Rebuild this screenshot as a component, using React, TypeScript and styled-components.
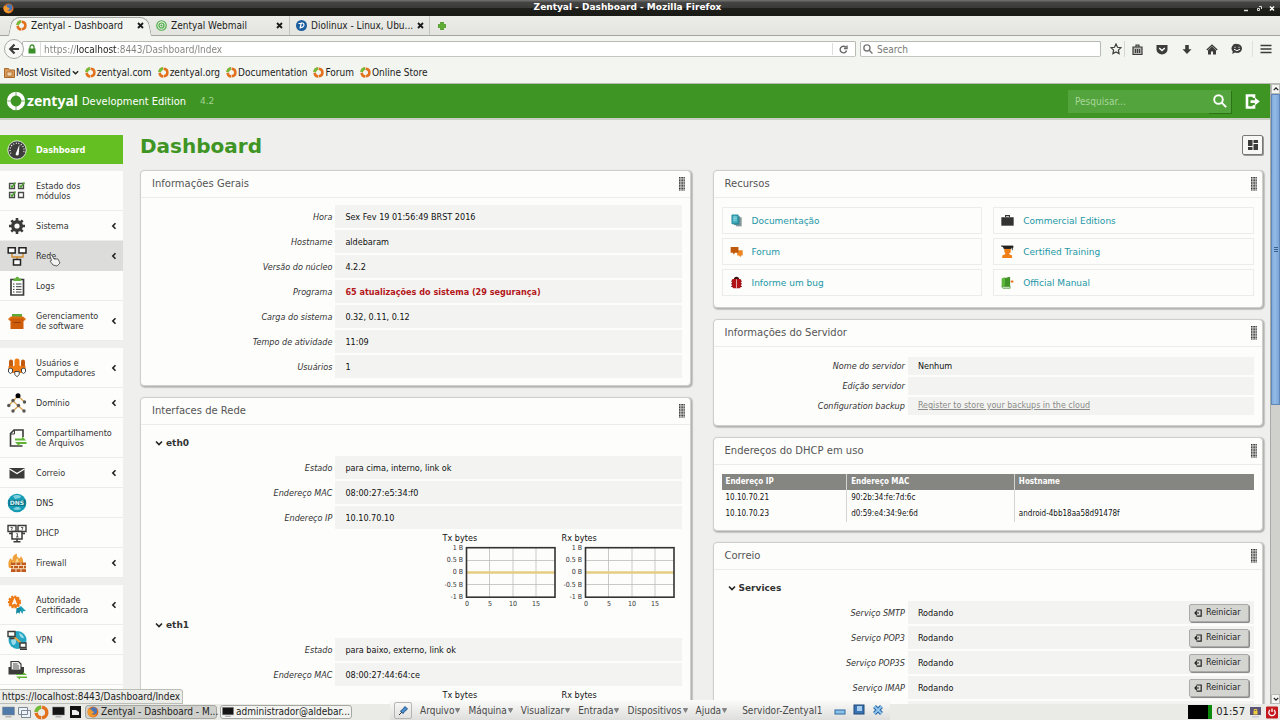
import React from "react";
import styled, { createGlobalStyle, css } from "styled-components";

const sans = `"DejaVu Sans", Verdana, sans-serif`;
const condensed = `"DejaVu Sans Condensed", "DejaVu Sans", Verdana, sans-serif`;

const color = {
  green: "#3e9523",
  active: "#64c022",
  chrome: "#f3f5f0",
  page: "#efefed",
  paper: "#fdfdfc",
  band: "#f3f4f1",
  line: "#ececea",
  link: "#1c97a5",
  ink: "#333333",
};

const GlobalStyle = createGlobalStyle`
  *, *::before, *::after { box-sizing: border-box; }
  body { margin: 0; font-family: ${condensed}; font-size: 9px; color: ${color.ink}; }
  button, input { font: inherit; color: inherit; margin: 0; padding: 0; border: 0; background: none; }
  a { color: inherit; text-decoration: none; }
  svg { display: block; flex: none; }
  h1, h2, h3, p, dl, dd, dt, ul { margin: 0; padding: 0; font-weight: normal; }
  ul { list-style: none; }
`;

/* ---------- window chrome ---------- */

const Desktop = styled.div`
  position: relative;
  display: flex;
  flex-direction: column;
  height: 100vh;
  overflow: hidden;
`;

const TitleBar = styled.header`
  display: flex;
  align-items: center;
  flex: none;
  height: 16px;
  padding: 0 3px;
  background: linear-gradient(#6b6b69 0 1px, #454543 2px, #3a3a38 8px, #1f1f1c 8px, #191916);
  color: #fff;
`;

const WindowTitle = styled.p`
  flex: 1;
  padding-bottom: 2px;
  text-align: center;
  font: bold 9px/12px ${sans};
`;

const WindowButtons = styled.div`
  display: flex;
  gap: 3px;
`;

const TabStrip = styled.div`
  display: flex;
  align-items: stretch;
  flex: none;
  height: 20px;
  padding-left: 10px;
  background: linear-gradient(#ecede9, #e3e4df);
  border-bottom: 1px solid #a3a5a0;
`;

const Tab = styled.div<{ $active?: boolean; $divided?: boolean }>`
  position: relative;
  display: flex;
  align-items: center;
  gap: 4px;
  width: 140px;
  padding: 0 6px;
  color: #1d1d1b;
  font-size: 10px;
  line-height: 14px;
  z-index: 0;
  ${(p) => p.$divided && css`border-right: 1px solid #c4c6c0;`}
  ${(p) =>
    p.$active &&
    css`
      &::before,
      &::after {
        content: "";
        position: absolute;
        z-index: -1;
        top: 1px;
        bottom: -1px;
        background: ${color.chrome};
        border-top: 1px solid #a3a5a0;
      }
      &::before {
        left: 0;
        right: 50%;
        border-left: 1px solid #a3a5a0;
        border-radius: 8px 0 0 0;
        transform: skewX(-12deg);
      }
      &::after {
        left: 40%;
        right: 0;
        border-right: 1px solid #a3a5a0;
        border-radius: 0 8px 0 0;
        transform: skewX(12deg);
      }
    `}
`;

const TabLabel = styled.button`
  flex: 1;
  text-align: left;
  white-space: nowrap;
`;

const IconButton = styled.button`
  display: flex;
  align-items: center;
  justify-content: center;
`;

const NewTab = styled(IconButton)`
  padding: 1px 8px 0;
`;

const NavBar = styled.div`
  display: flex;
  align-items: center;
  flex: none;
  height: 26px;
  padding: 0 8px 0 4px;
  background: ${color.chrome};
`;

const BackButton = styled(IconButton)`
  flex: none;
  width: 20px;
  height: 20px;
  border: 1px solid #a9aba6;
  border-radius: 50%;
  background: #f8f9f6;
  z-index: 1;
`;

const Field = styled.label`
  display: flex;
  align-items: center;
  height: 16px;
  background: #fff;
  border: 1px solid #b7b9b3;
  border-bottom-color: #c5c7c1;
  border-radius: 2px;
  font-size: 10px;
`;

const AddressField = styled(Field)`
  flex: 1;
  margin-left: -2px;
  padding: 0 7px 0 5px;
`;

const AddressInput = styled.input`
  flex: 1;
  min-width: 0;
  height: 14px;
  margin-left: 4px;
  padding-left: 3px;
  border-left: 1px solid #dddeda;
  outline: none;
  background: linear-gradient(90deg, #80827e 35px, #1d1d1b 35px 76px, #80827e 76px) padding-box text;
  color: transparent;
`;

const ReloadButton = styled(IconButton)`
  height: 12px;
  padding-left: 6px;
  border-left: 1px solid #dddeda;
`;

const SearchField = styled(Field)`
  flex: 0 1 241px;
  margin-left: 4px;
  padding: 0 2px;
`;

const SearchInput = styled.input`
  flex: 1;
  min-width: 0;
  height: 14px;
  padding-left: 4px;
  outline: none;
  &::placeholder { color: #777975; opacity: 1; }
`;

const ToolIcons = styled.div`
  display: flex;
  align-items: center;
  gap: 13px;
  padding-left: 9px;
  color: #3c3d3a;
`;

const ToolButton = styled(IconButton)<{ $rule?: "before" | "after" }>`
  width: 12px;
  height: 16px;
  ${(p) =>
    p.$rule === "after" &&
    css`
      width: 15px;
      margin-right: -7px;
      justify-content: flex-start;
      border-right: 1px solid #d5d7d1;
    `}
  ${(p) =>
    p.$rule === "before" &&
    css`
      width: 20px;
      margin-left: -4px;
      justify-content: flex-end;
      border-left: 1px solid #dfe1db;
    `}
`;

const Bookmarks = styled.nav`
  display: flex;
  align-items: center;
  flex: none;
  gap: 6px;
  height: 22px;
  padding: 0 4px;
  background: ${color.chrome};
  border-bottom: 1px solid #b9bbb5;
  color: #222;
  font-size: 10px;
`;

const Bookmark = styled.a`
  display: flex;
  align-items: center;
  gap: 1px;
`;

const Viewport = styled.div`
  display: flex;
  flex: 1;
  min-height: 0;
`;

const Page = styled.div`
  flex: 1;
  min-width: 0;
  overflow: hidden;
  background: ${color.page};
`;

const ScrollTrack = styled.div`
  display: flex;
  flex-direction: column;
  flex: none;
  width: 10px;
  background: #d0d1cc;
  border-left: 1px solid #a9aba6;
`;

const ScrollThumb = styled.div`
  display: flex;
  align-items: center;
  justify-content: center;
  flex: 1;
  margin-bottom: 289px;
  background: linear-gradient(90deg, #7fabdd, #94bbe6 40%, #7ba6d8);
  border: 1px solid #5f87b8;
`;

const ScrollArrow = styled(IconButton)`
  flex: none;
  height: 10px;
  background: #f4f5f2;
  border: 1px solid #b9bbb5;
`;

/* ---------- Zentyal page ---------- */

const AppHeader = styled.header`
  display: flex;
  align-items: center;
  height: 36px;
  padding: 0 10px 0 6px;
  background: ${color.green};
  border-bottom: 2px solid #c9cfc3;
  color: #fff;
`;

const Brand = styled.a`
  display: flex;
  align-items: center;
  gap: 1px;
  font: bold 14px/20px "Noto Sans", "Open Sans", sans-serif;
`;

const Edition = styled.span`
  margin-left: 4px;
  font-size: 11px;
`;

const Version = styled.span`
  flex: 1;
  margin-left: 14px;
  color: #a5d294;
  font: 9px/12px ${sans};
`;

const SiteSearch = styled.form`
  display: flex;
  width: 163px;
  height: 23px;
  background: #53a43c;
`;

const SiteSearchInput = styled.input`
  flex: 1;
  min-width: 0;
  padding-left: 7px;
  outline: none;
  font-size: 10px;
  &::placeholder { color: #a9d69a; opacity: 1; }
`;

const SiteSearchButton = styled(IconButton)`
  width: 23px;
  box-shadow: 1px 1px 0 #2c7316;
`;

const LogoutButton = styled(IconButton)`
  margin-left: 14px;
`;

const Body = styled.div`
  display: flex;
  align-items: flex-start;
  padding-top: 15px;
`;

const Sidebar = styled.nav`
  display: flex;
  flex-direction: column;
  flex: none;
  gap: 7px;
  width: 123px;
`;

const NavGroup = styled.ul`
  background: ${color.paper};
`;

const NavItem = styled.a<{ $tall?: boolean; $state?: "active" | "hover" }>`
  display: flex;
  align-items: center;
  gap: 9px;
  height: ${(p) => (p.$tall ? 40 : 30)}px;
  padding: 0 5px 0 7px;
  border-bottom: 1px solid ${color.line};
  font-size: 9px;
  line-height: 10px;
  ${(p) => p.$state === "hover" && css`background: #dcdcda; border-color: #dcdcda;`}
  ${(p) =>
    p.$state === "active" &&
    css`
      height: 29px;
      background: ${color.active};
      border: 0;
      color: #fff;
      font-weight: bold;
    `}
`;

const NavText = styled.span`
  flex: 1;
  white-space: pre;
`;

const Main = styled.main`
  flex: 1;
  min-width: 0;
  padding: 0 7px 0 17px;
`;

const TitleRow = styled.div`
  display: flex;
  justify-content: space-between;
  height: 35px;
`;

const PageTitle = styled.h1`
  color: ${color.green};
  font: bold 20px/22px ${sans};
`;

const LayoutButton = styled(IconButton)`
  width: 21px;
  height: 20px;
  background: #f7f7f5;
  border: 1px solid #777;
  border-radius: 2px;
  box-shadow: 1px 1px 0 #999;
`;

const Columns = styled.div`
  display: grid;
  grid-template-columns: 1fr 1fr;
  gap: 22px;
`;

const Column = styled.div`
  display: flex;
  flex-direction: column;
  min-width: 0;
  gap: 11px;
`;

const PanelBox = styled.section`
  background: ${color.paper};
  border: 1px solid #cfcfcc;
  border-radius: 4px;
  box-shadow: 1px 1px 0 #b4b4b1, 1px 1px 1px 1px #c4c4c1;
`;

const PanelHead = styled.header`
  display: flex;
  align-items: center;
  justify-content: space-between;
  height: 27px;
  padding: 0 5px 0 11px;
  border-bottom: 1px solid ${color.line};
`;

const PanelTitle = styled.h2`
  color: #555;
  font: 10px/14px ${sans};
`;

const PanelBody = styled.div<{ $top?: number; $bottom?: number }>`
  padding: ${(p) => p.$top ?? 0}px 8px ${(p) => p.$bottom ?? 7}px;
`;

const SectionTitle = styled.h3`
  display: flex;
  align-items: center;
  gap: 3px;
  height: 31px;
  padding: 5px 6px 0;
  font: bold 9px/12px ${sans};
`;

const Facts = styled.dl<{ $dense?: boolean }>`
  display: grid;
  grid-template-columns: 35fr 65fr;
  grid-auto-rows: ${(p) => (p.$dense ? 18 : 23)}px;
  gap: 2px 0;
`;

const FactLabel = styled.dt`
  display: flex;
  align-items: center;
  justify-content: flex-end;
  padding-right: 3px;
  font-style: italic;
`;

const FactValue = styled.dd<{ $alert?: boolean }>`
  display: flex;
  align-items: center;
  justify-content: space-between;
  padding: 0 5px 0 10px;
  background: ${color.band};
  color: #111;
  ${(p) => p.$alert && css`color: #b3161b; font-weight: bold;`}
`;

const BackupLink = styled.a`
  color: #8a8a88;
  text-decoration: underline;
  font: 8px/12px ${sans};
`;

const RestartButton = styled(IconButton)`
  justify-content: flex-start;
  gap: 4px;
  width: 60px;
  height: 18px;
  padding-left: 4px;
  background: #d4d4d1;
  border: 1px solid #aaa;
  border-radius: 2px;
  box-shadow: 1px 1px 0 #8c8c8a;
  color: #222;
  font: 8px/12px ${sans};
`;

const Charts = styled.div`
  display: flex;
  justify-content: flex-end;
  gap: 6px;
  height: 78px;
  padding: 2px 7px 0 0;
`;

const ChartBox = styled.figure`
  margin: 0;
`;

const ChartCaption = styled.figcaption`
  color: #111;
  line-height: 14px;
`;

const LinkGrid = styled.div`
  display: grid;
  grid-template-columns: 1fr 1fr;
  gap: 4px 11px;
`;

const ResourceLink = styled.a`
  display: flex;
  align-items: center;
  gap: 9px;
  height: 27px;
  padding-left: 7px;
  border: 1px solid ${color.line};
  color: ${color.link};
  font: 9px/12px ${sans};
`;

const LeaseTable = styled.table`
  width: 100%;
  table-layout: fixed;
  border-collapse: collapse;
  color: #111;
  font-size: 8px;
  line-height: 10px;
  th, td { height: 16px; padding: 0 4px; text-align: left; }
  th { background: #858581; color: #fff; }
  th + th, td + td { border-left: 1px solid #d4d4d1; }
`;

const LeaseCol = styled.col<{ $share: number }>`
  width: ${(p) => p.$share}%;
`;

/* ---------- desktop panel and overlays ---------- */

const StatusTip = styled.div`
  position: absolute;
  left: 0;
  bottom: 16px;
  padding: 0 2px 0 2px;
  background: #ecede9;
  border: 1px solid #bbbdb7;
  border-left: 0;
  border-top-right-radius: 3px;
  color: #222;
  font-size: 10px;
  line-height: 13px;
`;

const TaskBar = styled.footer`
  display: flex;
  align-items: center;
  flex: none;
  gap: 3px;
  height: 16px;
  padding: 0 2px;
  background: #eaebe7;
  font-size: 10px;
`;

const TaskButton = styled.button<{ $pressed?: boolean }>`
  display: flex;
  align-items: center;
  gap: 2px;
  width: 132px;
  height: 14px;
  padding: 0 1px;
  white-space: nowrap;
  border: 1px solid #a5a7a1;
  border-radius: 3px;
  background: ${(p) => (p.$pressed ? "#cfd0cb" : "#f3f4f1")};
  color: #222;
  line-height: 12px;
`;

const Tray = styled.div`
  display: flex;
  align-items: center;
  gap: 4px;
  margin-left: auto;
`;

const CpuMeter = styled.div`
  width: 24px;
  height: 14px;
  background: #000;
  border-right: 4px solid #0c8a0c;
`;

const Clock = styled.time`
  color: #222;
  font: 10px/14px ${sans};
`;

const GuestBar = styled.div`
  position: absolute;
  left: 390px;
  bottom: 0;
  display: flex;
  align-items: center;
  width: 500px;
  height: 20px;
  padding: 0 6px 0 4px;
  background: linear-gradient(#fbfbfa, #dededc);
  color: #4a4a49;
  font-size: 10px;
`;

const GuestMenu = styled.button`
  display: flex;
  align-items: center;
  gap: 1px;
  margin-right: 8px;
`;

const GuestPin = styled(IconButton)`
  width: 18px;
  height: 17px;
  margin-right: 8px;
  border: 1px solid #b5b5b3;
  border-radius: 2px;
`;

const GuestName = styled.span`
  flex: 1;
  padding-left: 7px;
  white-space: nowrap;
`;

const GuestActions = styled.div`
  display: flex;
  align-items: center;
  gap: 7px;
`;

const Pointer = styled.div`
  position: absolute;
  left: 49px;
  top: 254px;
`;

/* ---------- drawings ---------- */

type Size = { size?: number };

const Ring = ({ size = 11 }: Size) => (
  <svg width={size} height={size} viewBox="0 0 24 24" fill="none" strokeWidth="5.500">
    <circle cx="12" cy="12" r="8.5" stroke="#e2701c" strokeDasharray="12 1.35" />
    <path d="M3.5 11A8.5 8.5 0 0 1 11 3.5" stroke="#6fbf3a" />
  </svg>
);

const BrandRing = () => (
  <svg width="20" height="20" viewBox="0 0 20 20" fill="none">
    <circle cx="10" cy="10" r="7.300" stroke="#fff" strokeWidth="3.800" />
    <path d="M10 0v6M10 14v6M0 10h6M14 10h6" stroke={color.green} strokeWidth=".7" />
  </svg>
);

const Target = () => (
  <svg width="11" height="11" viewBox="0 0 22 22" fill="none" stroke="#4db046" strokeWidth="2.4">
    <circle cx="11" cy="11" r="9.5" />
    <circle cx="11" cy="11" r="5" />
    <circle cx="11" cy="11" r="1" />
  </svg>
);

const DioIcon = () => (
  <svg width="11" height="11" viewBox="0 0 22 22">
    <circle cx="11" cy="11" r="11" fill="#1d5f9e" />
    <path d="M8 17 10.500 6H13a3.500 4 0 0 1 1 7.500Q12 15 9 15M5 7h7" fill="none" stroke="#fff" strokeWidth="2.400" />
  </svg>
);

const Firefox = ({ size = 11 }: Size) => (
  <svg width={size} height={size} viewBox="0 0 22 22">
    <circle cx="11" cy="11" r="10" fill="#d96b1d" />
    <circle cx="12" cy="9" r="6.500" fill="#4a76b8" />
    <path d="M2 5q2 2 5 1 3 1 2 4 3-1 4 1-1 4-5 3 3 4 9 1-2 5-8 5-8-2-8-10z" fill="#f29a2e" />
  </svg>
);

const CloseX = () => (
  <svg width="7" height="7" viewBox="0 0 7 7" stroke="#1a1a1a" strokeWidth="1.800">
    <path d="m1 1 5 5M6 1 1 6" />
  </svg>
);

const Plus = () => (
  <svg width="8" height="8" viewBox="0 0 8 8">
    <path d="M2.500 0h3v2.500H8v3H5.500V8h-3V5.500H0v-3h2.500z" fill="#5fae32" stroke="#3f8a1c" strokeWidth=".6" />
  </svg>
);

const Chevron = ({ dir = "down", size = 8 }: Size & { dir?: "down" | "left" | "up" }) => (
  <svg width={size} height={size} viewBox="0 0 8 8" fill="none" stroke="#222" strokeWidth="1.600">
    <path d={dir === "down" ? "m1 2.500 3 3 3-3" : dir === "up" ? "m1 5.500 3-3 3 3" : "M5.500 1.200 2.800 4l2.700 2.800"} />
  </svg>
);

const Lens = ({ size = 10, stroke = "#777" }: Size & { stroke?: string }) => (
  <svg width={size} height={size} viewBox="0 0 14 14" fill="none" stroke={stroke} strokeWidth="1.900">
    <circle cx="5.500" cy="5.500" r="4.300" />
    <path d="m8.700 8.700 4.500 4.500" />
  </svg>
);

const Handle = () => (
  <svg width="6" height="14" viewBox="0 0 6 14" aria-hidden="true">
    {[0, 1, 2, 3].map((x) =>
      [0, 1, 2, 3, 4, 5, 6, 7, 8].map((y) => (
        <rect key={`${x}-${y}`} x={x * 1.55} y={y * 1.55} width="1.150" height="1.150" fill="#333" />
      )),
    )}
  </svg>
);

const Monitor = ({ fill = "#151515", size = 13 }: Size & { fill?: string }) => (
  <svg width={size} height="12" viewBox="0 0 13 12">
    <path d="M.500 1h12v8H.500z" fill={fill} stroke="#888" strokeWidth=".500" />
    <path d="M4 10h5l1 1.500H3z" fill="#b5b5b5" />
  </svg>
);

const icons: Record<string, React.ReactNode> = {
  gauge: (
    <>
      <circle cx="10" cy="10" r="9.200" fill="#3d3e3c" stroke="#fff" strokeWidth=".8" />
      <path d="M3.800 13.500A7 7 0 1 1 16.200 13.500" fill="none" stroke="#fff" strokeWidth="1.300" strokeDasharray=".9 1.700" />
      <path d="M8.600 14 12.500 4.500 11.700 14.500a1.600 1.600 0 0 1-3.100-.500z" fill="#fff" />
    </>
  ),
  modules: (
    <>
      <path d="M2.500 2.500h5v5h-5zM11.500 2.500h5v5h-5zM2.500 11.500h5v5h-5zM11.500 11.500h5v5h-5z" fill="none" stroke="#4a4b48" strokeWidth="1.300" />
      <path d="m3.500 4.500 1.500 1.500L8.500 1.500m4 3 1.500 1.500 3.500-4.500m-14 12 1.500 1.500 3.500-4.500" fill="none" stroke="#4f9e35" strokeWidth="1.500" />
    </>
  ),
  gear: (
    <g stroke="#3b3c3a">
      <circle cx="10" cy="10" r="4.300" fill="none" strokeWidth="3.400" />
      <path d="M10 2v3.500M10 14.500V18M2 10h3.500M14.500 10H18M4.300 4.300 7 7M13 13l2.700 2.700M4.300 15.700 7 13M13 7l2.700-2.700" strokeWidth="2.600" />
    </g>
  ),
  network: (
    <>
      <path d="M5 7v4h11V7m-6 4v3" fill="none" stroke="#cf8a2b" strokeWidth="1.400" />
      <path d="M1.200 1.700h7v5.300h-7zM12 1.700h7v5.300h-7zM6.500 13.500h7V19h-7z" fill="#fff" stroke="#222" strokeWidth="1.500" />
    </>
  ),
  logs: (
    <>
      <path d="M4 3.500h12.500V19H4z" fill="#fff" stroke="#3b3c3a" strokeWidth="1.700" />
      <path d="M6.500 2.500h2a1.800 1.800 0 0 1 3.600 0h2V5h-7.600z" fill="#62b13b" />
      <path d="M6 8h1.500M9 8h5.500M6 10.700h1.500M9 10.700h5.500M6 13.400h1.500M9 13.400h5.500M6 16h1.500M9 16h5.500" stroke="#3b3c3a" />
    </>
  ),
  box: (
    <>
      <path d="M5 3h10v4H5z" fill="#5eab38" />
      <path d="m1 8 3-2.500h12L19 8l-2 2H3z" fill="#e06f10" />
      <path d="M3.500 7.500h13V18h-13z" fill="#cf5c08" />
      <path d="M6.500 11.500h7" stroke="#8e3d04" />
    </>
  ),
  users: (
    <>
      <path d="M2 3.500a2 2 0 0 1 4 0V10H2zM14 3.500a2 2 0 0 1 4 0V10h-4z" fill="#c25a10" />
      <path d="M1.500 8h5v5h-5zM13.500 8h5v5h-5z" fill="#e8730d" />
      <path d="M7.500 3a2.500 2.500 0 0 1 5 0v4.500L15 9v6H5V9l2.500-1.500z" fill="#f07c14" />
      <path d="M1.500 11q2-1.500 4 0v3l-2 1.500-2-1.500zM14.500 11q2-1.500 4 0v3l-2 1.500-2-1.500zM7.800 13.500h4.400v3L10 18.800l-2.200-2.300z" fill="#fff" stroke="#444" strokeWidth="1" />
    </>
  ),
  domain: (
    <>
      <path d="M11 3 6 8l-4.500 5M11 3l6.500 6M6 8l5.500 5L6 18M11.500 13l5.500 5" fill="none" stroke="#d6a04b" strokeWidth="1.200" />
      <circle cx="11" cy="2.800" r="2.500" />
      <g fill="#555">
        <circle cx="6" cy="7.500" r="1.700" /><circle cx="17.500" cy="9" r="1.700" /><circle cx="1.800" cy="12.500" r="1.700" />
        <circle cx="11.500" cy="12.500" r="1.700" /><circle cx="6" cy="18" r="1.700" /><circle cx="17" cy="18" r="1.700" />
      </g>
    </>
  ),
  share: (
    <>
      <path d="M16 9V2H7L3.500 5.500v12.500h12" fill="none" stroke="#3b3c3a" strokeWidth="1.600" />
      <path d="M7.500 2V6h-4" fill="none" stroke="#3b3c3a" />
      <path d="M8 10.500h7V8l4 4.500H8zM19.500 14H8l4.500 4.500V16h7z" fill="#5fb434" />
    </>
  ),
  mail: (
    <>
      <path d="M2.500 5h15v10.500h-15z" fill="#3b3c3a" />
      <path d="m2.500 6 7.500 4.500L17.500 6" fill="none" stroke="#fff" strokeWidth="1.200" />
    </>
  ),
  dns: (
    <>
      <circle cx="10" cy="10" r="9.300" fill="#169cb4" />
      <path d="M6 3q4-2 8 0l-1 2-5 1zM6 16q4 2 8 0l-2-2H9z" fill="#7fd0dd" />
      <path d="M1.500 7h17v6h-17z" fill="#0f7387" />
      <text x="10" y="12.300" fill="#d9f2f5" fontSize="6" fontWeight="bold" textAnchor="middle" fontFamily="DejaVu Sans">DNS</text>
    </>
  ),
  dhcp: (
    <>
      <path d="M1 2.500h8v6H1zM11 2.500h8v6h-8zM2 10.500h5M13 10.500h5" fill="#fff" stroke="#3b3c3a" strokeWidth="1.400" />
      <path d="M3.500 4.500h2L4.500 7M14 4.500h2L15 7" fill="none" stroke="#3b3c3a" strokeWidth=".8" />
      <path d="M5 8.500h10V16H5zM10 16v2.500M6.500 18.700h7" fill="#fff" stroke="#3b3c3a" strokeWidth="1.500" />
      <path d="M9.500 10.500h.8v3.500M9 14h2.500" fill="none" stroke="#3b3c3a" strokeWidth=".9" />
    </>
  ),
  firewall: (
    <>
      <path d="M2 15Q0 8 4 5q0 2 1.500 2Q5 2 10 .5 9 4 12 5q2 1 1.500-2Q17 6 16 10v5z" fill="#f0a03a" />
      <path d="M4.500 12q0-3 2-4 0 2 2 1 0-3 2.500-4-.500 3 2 5z" fill="#fbd58a" />
      <path d="M4 9.500h15V19H4z" fill="#bf5a1a" />
      <path d="M4 12.500h15M4 15.700h15M9 9.500v3M14 9.500v3M6.500 12.500v3M11.500 12.500v3M16.500 12.500v3M9 15.700V19M14 15.700V19" stroke="#fbe3c8" strokeWidth=".9" />
    </>
  ),
  cert: (
    <>
      <path d="m11 13 3-2 5 5-3 .3L15.500 19z" fill="#1f9db5" />
      <path d="m9.500 13-.5 6 2-1.500 1.500 1.200L14 13z" fill="#1589a0" />
      <circle cx="7.500" cy="7" r="5.600" fill="#ef7a14" stroke="#ef7a14" strokeWidth="2" strokeDasharray="2 1.200" />
      <path d="m5.500 9.500 2-5 2 5M6.200 8h2.600" fill="none" stroke="#fff" strokeWidth="1.300" />
    </>
  ),
  vpn: (
    <>
      <circle cx="10.500" cy="10" r="9" fill="#25a6c4" />
      <path d="M5 8q4-1 4 3t-3 4q-3-3-1-7zM12 3q4 1 5 5-4 1-5-5z" fill="#9edbe8" />
      <path d="m5 5 11 10" stroke="#e9a23b" strokeWidth="2" />
      <path d="M1 1.500h7v5H1zM2.500 8.500h5M13 13h6v4.500h-6zM13 19.300h7" fill="#fff" stroke="#3b3c3a" strokeWidth="1.400" />
    </>
  ),
  printer: (
    <>
      <path d="M1.500 7h15.500v7.500H1.500z" fill="#3b3c3a" />
      <path d="M4 1.500h7.500L14 4v6H4z" fill="#eee" stroke="#3b3c3a" strokeWidth="1.200" />
      <path d="M6 4h4.500M6 6h6M6 8h6" stroke="#555" />
      <path d="M9 14h7v-2l4 3H9zM20 16.500H9l4 3v-1.500h7z" fill="#5fb434" />
    </>
  ),
  docs: (
    <>
      <path d="M9 5h9v14H9z" fill="#8b9a9c" />
      <path d="M6 3.500h9.500V17H6z" fill="#5c8f97" />
      <path d="M3 1.500h9.500V15H3z" fill="#3fb1c1" stroke="#1b7f90" strokeWidth="1.300" />
      <path d="M5 4.500h5.500M5 7h5.500M5 9.500h5.500" stroke="#c6ebf0" />
    </>
  ),
  forum: (
    <>
      <path d="M11 8h8.500v8H17l-1 3-2-3h-3z" fill="#ee8420" />
      <path d="M1 3h12v9H8l-3 3v-3H1z" fill="#bf5a0c" />
    </>
  ),
  bug: (
    <>
      <path d="M6 5q0-4 4-4t4 4z" fill="#3a1010" />
      <path d="M3 6q0-1.500 2-1.500h10q2 0 2 1.500v10l-2 3H5l-2-3z" fill="#b11116" />
      <path d="M10 5v14" stroke="#f0d0d0" strokeWidth="1.200" />
      <path d="M1.500 8h2M16.500 8h2M1.500 12h2M16.500 12h2M1.500 16h2M16.500 16h2" stroke="#6a0a0c" strokeWidth="1.300" />
    </>
  ),
  briefcase: (
    <>
      <path d="M7 5V2.500h6V5" fill="none" stroke="#333" strokeWidth="1.600" />
      <path d="M.500 5h19v13H.500z" fill="#333432" />
    </>
  ),
  training: (
    <>
      <path d="M5 4h10v7l-3 3 5 2v4H2v-4l5-2-2-4z" fill="#ef7f17" />
      <path d="M.500 1.500h18V4H4V3zM17.500 2v6" fill="#222" stroke="#222" strokeWidth="1.200" />
      <path d="M4 3h12v3H4z" fill="#222" />
    </>
  ),
  manual: (
    <>
      <path d="M6 3 14 1v17H4z" fill="#3f9327" />
      <path d="m1 4 5-2v14H1z" fill="#5cb63a" />
      <path d="M1 16h13v3H3z" fill="#cde5c2" stroke="#3f9327" />
      <path d="M15 7h4v3h-4z" fill="#e2701c" />
    </>
  ),
};

const Art = ({ name, size = 20 }: { name: string; size?: number }) => (
  <svg width={size} height={size} viewBox="0 0 20 20" aria-hidden="true">{icons[name]}</svg>
);

const Chart = ({ title, axes }: { title: string; axes: boolean }) => (
  <ChartBox>
    <ChartCaption>{title}</ChartCaption>
    <svg width="113" height="62" viewBox="0 0 113 62" fontFamily="DejaVu Sans Condensed" fontSize="7" fill="#333">
      <path d="M46.500 3v49M70 3v49M93 3v49" stroke="#c9c9c7" />
      <path d="M23 15.500h89M23 39.500h89" stroke="#bdbdbb" strokeWidth=".8" />
      <path d="M23 27.500h89" stroke="#e4cd82" strokeWidth="2.400" />
      <rect x="23.500" y="2.700" width="88.500" height="49.500" fill="none" stroke="#333" strokeWidth="1.600" />
      {axes && ["1 B", "0.5 B", "0 B", "-0.5 B", "-1 B"].map((t, i) => (
        <text key={t} x="20" y={5 + i * 12.2} textAnchor="end">{t}</text>
      ))}
      {axes && [0, 5, 10, 15].map((t, i) => (
        <text key={t} x={24 + i * 23} y="61" textAnchor="middle">{t}</text>
      ))}
    </svg>
  </ChartBox>
);

/* ---------- content ---------- */

type Item = { icon: string; text: string; more?: boolean; state?: "active" | "hover" };

const menu: Item[][] = [
  [{ icon: "gauge", text: "Dashboard", state: "active" }],
  [
    { icon: "modules", text: "Estado dos\nmódulos" },
    { icon: "gear", text: "Sistema", more: true },
    { icon: "network", text: "Rede", more: true, state: "hover" },
    { icon: "logs", text: "Logs" },
    { icon: "box", text: "Gerenciamento\nde software", more: true },
  ],
  [
    { icon: "users", text: "Usuários e\nComputadores", more: true },
    { icon: "domain", text: "Domínio", more: true },
    { icon: "share", text: "Compartilhamento\nde Arquivos" },
    { icon: "mail", text: "Correio", more: true },
    { icon: "dns", text: "DNS" },
    { icon: "dhcp", text: "DHCP" },
    { icon: "firewall", text: "Firewall", more: true },
  ],
  [
    { icon: "cert", text: "Autoridade\nCertificadora", more: true },
    { icon: "vpn", text: "VPN", more: true },
    { icon: "printer", text: "Impressoras" },
    { icon: "", text: "" },
  ],
];

const resources = [
  ["docs", "Documentação"],
  ["briefcase", "Commercial Editions"],
  ["forum", "Forum"],
  ["training", "Certified Training"],
  ["bug", "Informe um bug"],
  ["manual", "Official Manual"],
];

const general = [
  ["Hora", "Sex Fev 19 01:56:49 BRST 2016"],
  ["Hostname", "aldebaram"],
  ["Versão do núcleo", "4.2.2"],
  ["Programa", "65 atualizações do sistema (29 segurança)"],
  ["Carga do sistema", "0.32, 0.11, 0.12"],
  ["Tempo de atividade", "11:09"],
  ["Usuários", "1"],
];

const Panel = ({ title, top, bottom, children }: { title: string; top?: number; bottom?: number; children: React.ReactNode }) => (
  <PanelBox>
    <PanelHead>
      <PanelTitle>{title}</PanelTitle>
      <Handle />
    </PanelHead>
    <PanelBody $top={top} $bottom={bottom}>{children}</PanelBody>
  </PanelBox>
);

const Fact = ({ label, alert, children }: { label: string; alert?: boolean; children?: React.ReactNode }) => (
  <>
    <FactLabel>{label}</FactLabel>
    <FactValue $alert={alert}>{children}</FactValue>
  </>
);

const Interface = ({ name, facts, axes = false }: { name: string; facts: string[][]; axes?: boolean }) => (
  <>
    <SectionTitle><Chevron />{name}</SectionTitle>
    <Facts>{facts.map(([l, v]) => <Fact key={l} label={l}>{v}</Fact>)}</Facts>
    <Charts>
      <Chart title="Tx bytes" axes={axes} />
      <Chart title="Rx bytes" axes={axes} />
    </Charts>
  </>
);

const BrowserChrome = () => (
  <>
    <TitleBar>
      <Firefox />
      <WindowTitle>Zentyal - Dashboard - Mozilla Firefox</WindowTitle>
      <WindowButtons>
        <IconButton aria-label="Minimize"><svg width="10" height="10" stroke="#ddd" strokeWidth="1.500"><path d="M3 7.500h4" /></svg></IconButton>
        <IconButton aria-label="Restore"><svg width="10" height="10" fill="none" stroke="#ddd"><path d="M3.500 5.500h2v2h-2zM5 3.500h2.500V6" /></svg></IconButton>
        <IconButton aria-label="Close"><svg width="10" height="10" stroke="#fff" strokeWidth="1.500"><path d="m3 3.500 4 4M7 3.500l-4 4" /></svg></IconButton>
      </WindowButtons>
    </TitleBar>
    <TabStrip>
      <Tab $active><Ring /><TabLabel>Zentyal - Dashboard</TabLabel><IconButton aria-label="Close tab"><CloseX /></IconButton></Tab>
      <Tab $divided><Target /><TabLabel>Zentyal Webmail</TabLabel><IconButton aria-label="Close tab"><CloseX /></IconButton></Tab>
      <Tab $divided><DioIcon /><TabLabel>Diolinux - Linux, Ubu...</TabLabel><IconButton aria-label="Close tab"><CloseX /></IconButton></Tab>
      <NewTab aria-label="New tab"><Plus /></NewTab>
    </TabStrip>
    <NavBar>
      <BackButton aria-label="Back">
        <svg width="12" height="12" viewBox="0 0 12 12" fill="none" stroke="#3c3d3a" strokeWidth="2.200"><path d="M6.500 1.500 2.200 6l4.300 4.500M2.500 6H11" /></svg>
      </BackButton>
      <AddressField>
        <svg width="8" height="10" viewBox="0 0 8 10"><path d="M2 5V3a2 2 0 0 1 4 0v2" fill="none" stroke="#3b8f2b" strokeWidth="1.300" /><path d="M.500 4.500h7V9.500h-7z" fill="#3b8f2b" /></svg>
        <AddressInput aria-label="Address" defaultValue="https://localhost:8443/Dashboard/Index" />
        <ReloadButton aria-label="Reload">
          <svg width="9" height="9" viewBox="0 0 9 9" fill="none" stroke="#666" strokeWidth="1.400"><path d="M7.600 5.500A3.300 3.300 0 1 1 6.800 2.200M8 .5v3H5" /></svg>
        </ReloadButton>
      </AddressField>
      <SearchField>
        <Lens />
        <SearchInput aria-label="Search" placeholder="Search" />
      </SearchField>
      <ToolIcons>
        <ToolButton $rule="after" aria-label="Bookmark this page"><svg width="12" height="12" viewBox="0 0 12 12" fill="none" stroke="currentColor" strokeWidth="1.200"><path d="m6 1 1.500 3.300 3.500.4-2.600 2.400.7 3.500L6 8.900l-3.100 1.700.7-3.500L1 4.700l3.500-.4z" /></svg></ToolButton>
        <ToolButton aria-label="Bookmarks"><svg width="11" height="11" viewBox="0 0 11 11"><path d="M1 3h9v7.500H1zM4 3V1h3v2M3.500 5v4M5.500 5v4M7.500 5v4" fill="#b5b6b3" stroke="currentColor" strokeWidth="1.200" /></svg></ToolButton>
        <ToolButton aria-label="Pocket"><svg width="12" height="11" viewBox="0 0 12 11"><path d="M.5 1h11v4.500a5.500 5 0 0 1-11 0z" fill="currentColor" /><path d="m3.200 4 2.800 2.600L8.800 4" fill="none" stroke="#fff" strokeWidth="1.400" /></svg></ToolButton>
        <ToolButton aria-label="Downloads"><svg width="10" height="11" viewBox="0 0 10 11"><path d="M3.200 1h3.600v4.200h2.700L5 10 .5 5.200h2.700z" fill="currentColor" /></svg></ToolButton>
        <ToolButton aria-label="Home"><svg width="12" height="11" viewBox="0 0 12 11"><path d="m6 2.500 4 3.700v4.300H7V7.500H5v3H2V6.200z" fill="currentColor" /><path d="M.8 6 6 1.200 11.200 6" fill="none" stroke="currentColor" strokeWidth="1.300" /></svg></ToolButton>
        <ToolButton aria-label="Hello"><svg width="12" height="12" viewBox="0 0 12 12"><path d="M6 1a5 4.500 0 0 1 0 9q-1 0-2-.4L1.200 11l.6-2.500A4.500 4.500 0 0 1 6 1z" fill="currentColor" /><path d="M3 6.200q3 3 6 0M4 3.800v1M8 3.800v1" fill="none" stroke="#fff" /></svg></ToolButton>
        <ToolButton $rule="before" aria-label="Menu"><svg width="12" height="10" viewBox="0 0 12 10" stroke="currentColor" strokeWidth="1.700"><path d="M.5 1.500h11M.5 5h11M.5 8.500h11" /></svg></ToolButton>
      </ToolIcons>
    </NavBar>
    <Bookmarks>
      <Bookmark href="#most-visited">
        <svg width="11" height="11" viewBox="0 0 11 11"><path d="M.5 1.500h4l1 1.500h5v7.500H.5z" fill="#d79b5a" stroke="#a9692a" /><path d="M3 5h5v4H3z" fill="#f0d3ac" stroke="#a9692a" strokeWidth=".7" /></svg>
        Most Visited<Chevron size={7} />
      </Bookmark>
      {["zentyal.com", "zentyal.org", "Documentation", "Forum", "Online Store"].map((b) => (
        <Bookmark key={b} href={`#${b}`}><Ring />{b}</Bookmark>
      ))}
    </Bookmarks>
  </>
);

const ZentyalHeader = () => (
  <AppHeader>
    <Brand href="#home"><BrandRing />zentyal</Brand>
    <Edition>Development Edition</Edition>
    <Version>4.2</Version>
    <SiteSearch>
      <SiteSearchInput aria-label="Pesquisar" placeholder="Pesquisar..." />
      <SiteSearchButton type="button" aria-label="Buscar"><Lens size={14} stroke="#fff" /></SiteSearchButton>
    </SiteSearch>
    <LogoutButton aria-label="Sair">
      <svg width="15" height="15" viewBox="0 0 15 15"><path d="M9 4V1.500H2v12h7V11" fill="none" stroke="#fff" strokeWidth="2.600" /><path d="M5.500 6.300h4.300V3.500L14.800 7.600 9.800 11.600V9H5.500z" fill="#fff" /></svg>
    </LogoutButton>
  </AppHeader>
);

const SideMenu = () => (
  <Sidebar>
    {menu.map((group, g) => (
      <NavGroup key={g}>
        {group.map((item, i) => (
          <li key={i}>
            <NavItem href={`#${item.icon}`} $state={item.state} $tall={item.text.includes("\n")}>
              <Art name={item.icon} />
              <NavText>{item.text}</NavText>
              {item.more && <Chevron dir="left" />}
            </NavItem>
          </li>
        ))}
      </NavGroup>
    ))}
  </Sidebar>
);

const Dashboard = () => (
  <Main>
    <TitleRow>
      <PageTitle>Dashboard</PageTitle>
      <LayoutButton aria-label="Configurar widgets">
        <svg width="10" height="10" viewBox="0 0 10 10" fill="#3b3c3a"><path d="M0 0h4.500v6H0zM0 7h4.500v3H0zM5.500 0H10v3H5.500zM5.500 4H10v6H5.500z" /></svg>
      </LayoutButton>
    </TitleRow>
    <Columns>
      <Column>
        <Panel title="Informações Gerais" top={7}>
          <Facts>{general.map(([l, v]) => <Fact key={l} label={l} alert={l === "Programa"}>{v}</Fact>)}</Facts>
        </Panel>
        <Panel title="Interfaces de Rede">
          <Interface axes name="eth0" facts={[["Estado", "para cima, interno, link ok"], ["Endereço MAC", "08:00:27:e5:34:f0"], ["Endereço IP", "10.10.70.10"]]} />
          <Interface name="eth1" facts={[["Estado", "para baixo, externo, link ok"], ["Endereço MAC", "08:00:27:44:64:ce"]]} />
        </Panel>
      </Column>
      <Column>
        <Panel title="Recursos" top={9} bottom={11}>
          <LinkGrid>
            {resources.map(([icon, text]) => (
              <ResourceLink key={icon} href={`#${icon}`}><Art name={icon} size={13} />{text}</ResourceLink>
            ))}
          </LinkGrid>
        </Panel>
        <Panel title="Informações do Servidor" top={10} bottom={10}>
          <Facts $dense>
            <Fact label="Nome do servidor">Nenhum</Fact>
            <Fact label="Edição servidor" />
            <Fact label="Configuration backup"><BackupLink href="#backup">Register to store your backups in the cloud</BackupLink></Fact>
          </Facts>
        </Panel>
        <Panel title="Endereços do DHCP em uso" top={9} bottom={8}>
          <LeaseTable>
            <colgroup><LeaseCol $share={23.5} /><LeaseCol $share={31.5} /><LeaseCol $share={45} /></colgroup>
            <thead><tr><th scope="col">Endereço IP</th><th scope="col">Endereço MAC</th><th scope="col">Hostname</th></tr></thead>
            <tbody>
              <tr><td>10.10.70.21</td><td>90:2b:34:fe:7d:6c</td><td /></tr>
              <tr><td>10.10.70.23</td><td>d0:59:e4:34:9e:6d</td><td>android-4bb18aa58d91478f</td></tr>
            </tbody>
          </LeaseTable>
        </Panel>
        <Panel title="Correio">
          <SectionTitle><Chevron />Services</SectionTitle>
          <Facts>
            {["SMTP", "POP3", "POP3S", "IMAP"].map((s) => (
              <Fact key={s} label={`Serviço ${s}`}>
                Rodando
                <RestartButton>
                  <svg width="8" height="8" viewBox="0 0 8 8" fill="none" stroke="#222" strokeWidth="1.200"><path d="M2.500 1h4.700v6.200H2.500M5 4H1M2.800 2 1 4l1.800 2" /></svg>
                  Reiniciar
                </RestartButton>
              </Fact>
            ))}
            <Fact label="" />
          </Facts>
        </Panel>
      </Column>
    </Columns>
  </Main>
);

const DesktopPanel = () => (
  <TaskBar>
    <Monitor fill="#4f79a8" />
    <svg width="13" height="12" viewBox="0 0 13 12" fill="#eef3f9" stroke="#7b8794"><path d="M.5 1.500h9v7h-9zM3.500 4.500h9v7h-9z" /></svg>
    <Ring size={15} />
    <Monitor />
    <svg width="14" height="12" viewBox="0 0 14 12"><path d="M2 0h11v12H2z" fill="#111" /><path d="M4 4h4l3 2v3H4z" fill="#eee" /></svg>
    <TaskButton $pressed><Firefox size={12} />Zentyal - Dashboard - M...</TaskButton>
    <TaskButton><Monitor size={12} />administrador@aldebar...</TaskButton>
    <Tray>
      <CpuMeter />
      <Clock>01:57</Clock>
      <svg width="13" height="13" viewBox="0 0 13 13"><path d="M1 1h11v8H1z" fill="#5d5577" /><path d="M4.500 5h4v3.500h-4z" fill="#f0cf3c" /><path d="M5.300 5V3.500h2.400V5" fill="none" stroke="#f0cf3c" /><path d="M3 10h7v1.500H3z" fill="#c9c9d2" /></svg>
      <svg width="12" height="13" viewBox="0 0 12 13"><rect y=".5" width="12" height="12" rx="1" fill="#c4181c" /><path d="M4 4a3.200 3.200 0 1 0 4 0M6 2.500V6" fill="none" stroke="#fff" strokeWidth="1.300" /></svg>
    </Tray>
  </TaskBar>
);

const GuestToolbar = () => (
  <GuestBar>
    <GuestPin aria-label="Fixar">
      <svg width="11" height="11" viewBox="0 0 11 11"><path d="m1 10 3-3" stroke="#333" /><path d="m2.500 6 2-1.500L7 1.500 9.500 4 6.500 6.500 5 8.500z" fill="#4b8fce" stroke="#1d4f85" /></svg>
    </GuestPin>
    {["Arquivo", "Máquina", "Visualizar", "Entrada", "Dispositivos", "Ajuda"].map((m) => (
      <GuestMenu key={m}>{m}<svg width="5" height="5" viewBox="0 0 5 5"><path d="M.3.5h4.400L2.500 4.500z" fill="#888" stroke="#555" strokeWidth=".5" /></svg></GuestMenu>
    ))}
    <GuestName>Servidor-Zentyal1</GuestName>
    <GuestActions>
      <IconButton aria-label="Minimizar"><svg width="12" height="12"><rect x="1" y="6" width="10" height="4" fill="#8fc1e8" stroke="#2b6ca3" /></svg></IconButton>
      <IconButton aria-label="Restaurar"><svg width="12" height="12"><rect x="1" y="1" width="10" height="9" fill="#3973b4" stroke="#1e4675" /><rect x="4" y="2" width="5" height="5" fill="#a6cdf0" /></svg></IconButton>
      <IconButton aria-label="Fechar"><svg width="12" height="12" viewBox="0 0 12 12"><path d="m2.500 2.500 7 7M9.500 2.500l-7 7" stroke="#2563a0" strokeWidth="4" /><path d="m2.500 2.500 7 7M9.500 2.500l-7 7" stroke="#8fc6f0" strokeWidth="2" /></svg></IconButton>
    </GuestActions>
  </GuestBar>
);

export default function App() {
  return (
    <Desktop>
      <GlobalStyle />
      <BrowserChrome />
      <Viewport>
        <Page>
          <ZentyalHeader />
          <Body>
            <SideMenu />
            <Dashboard />
          </Body>
        </Page>
        <ScrollTrack>
          <ScrollArrow aria-label="Scroll up"><Chevron dir="up" size={6} /></ScrollArrow>
          <ScrollThumb><svg width="4" height="6" stroke="#3b5f8f"><path d="M0 .5h4M0 2.500h4M0 4.500h4" /></svg></ScrollThumb>
          <ScrollArrow aria-label="Scroll down"><Chevron size={6} /></ScrollArrow>
        </ScrollTrack>
      </Viewport>
      <DesktopPanel />
      <StatusTip>https://localhost:8443/Dashboard/Index</StatusTip>
      <GuestToolbar />
      <Pointer>
        <svg width="12" height="13" viewBox="0 0 12 13"><path d="M1 1q1-1 2 .5L5 5l4 0 2 4-3 3-4-1-3-4 1.500-.5L1 2z" fill="#f2f2f0" stroke="#555" strokeWidth=".9" /></svg>
      </Pointer>
    </Desktop>
  );
}
